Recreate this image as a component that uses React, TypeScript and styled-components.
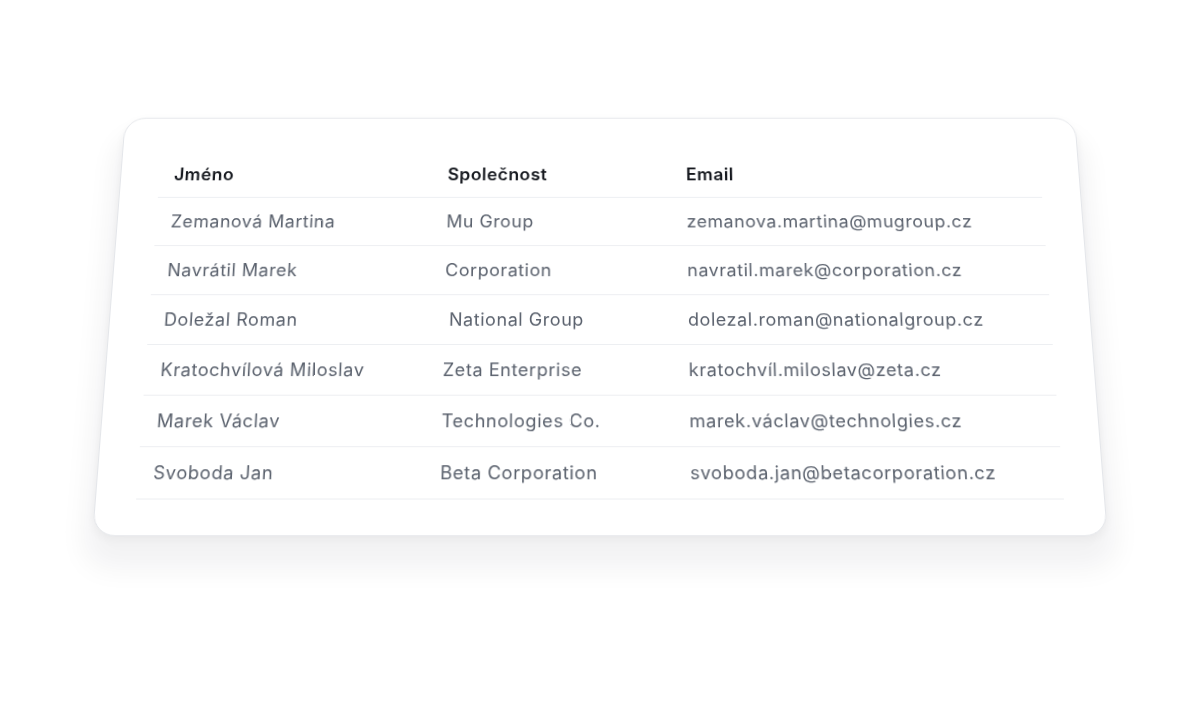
import React from "react";
import styled, { createGlobalStyle } from "styled-components";

const Global = createGlobalStyle`
  html, body { margin: 0; padding: 0; background: #ffffff; }
  body { font-family: Inter, "Noto Sans", sans-serif; -webkit-font-smoothing: antialiased; }
`;

const Stage = styled.main`
  width: 1200px;
  height: 714px;
  display: flex;
  justify-content: center;
  align-items: flex-start;
  padding-top: 102px;
  box-sizing: border-box;
  overflow: hidden;
`;

const Card = styled.section`
  width: 982px;
  height: 436px;
  box-sizing: border-box;
  padding: 36px 39px 37px;
  background: #ffffff;
  border: 1px solid #e4e6ea;
  border-radius: 22px;
  box-shadow: 0 24px 26px 8px rgba(17, 24, 39, 0.05), 0 4px 12px rgba(17, 24, 39, 0.05);
  transform: perspective(1850px) rotateX(16.5deg);
  transform-origin: 50% 50%;
`;

const Table = styled.div`
  display: flex;
  flex-direction: column;
`;

const Row = styled.div<{ $head?: boolean }>`
  display: grid;
  grid-template-columns: 280px 244px 1fr;
  align-items: center;
  height: ${(p) => (p.$head ? "50px" : "51px")};
  border-bottom: 1px solid #eceef1;
`;

const HeadCell = styled.div`
  padding-left: 15px;
  font-size: 18px;
  font-weight: 600;
  color: #16191f;
  letter-spacing: 0.4px;
`;

const Cell = styled.div<{ $nudge?: number }>`
  padding-left: ${(p) => 15 + (p.$nudge ?? 0)}px;
  font-size: 18px;
  font-weight: 400;
  color: #5a616d;
  letter-spacing: 0.55px;
  white-space: nowrap;
`;

type Person = { name: string; company: string; email: string; nudge?: number };

const people: Person[] = [
  { name: "Zemanová Martina", company: "Mu Group", email: "zemanova.martina@mugroup.cz" },
  { name: "Navrátil Marek", company: "Corporation", email: "navratil.marek@corporation.cz" },
  { name: "Doležal Roman", company: "National Group", email: "dolezal.roman@nationalgroup.cz", nudge: 5 },
  { name: "Kratochvílová Miloslav", company: "Zeta Enterprise", email: "kratochvíl.miloslav@zeta.cz" },
  { name: "Marek Václav", company: "Technologies Co.", email: "marek.václav@technolgies.cz" },
  { name: "Svoboda Jan", company: "Beta Corporation", email: "svoboda.jan@betacorporation.cz" },
];

export default function App() {
  return (
    <>
      <Global />
      <Stage>
        <Card>
          <Table>
            <Row $head>
              <HeadCell>Jméno</HeadCell>
              <HeadCell>Společnost</HeadCell>
              <HeadCell>Email</HeadCell>
            </Row>
            {people.map((p) => (
              <Row key={p.email}>
                <Cell>{p.name}</Cell>
                <Cell $nudge={p.nudge}>{p.company}</Cell>
                <Cell>{p.email}</Cell>
              </Row>
            ))}
          </Table>
        </Card>
      </Stage>
    </>
  );
}
